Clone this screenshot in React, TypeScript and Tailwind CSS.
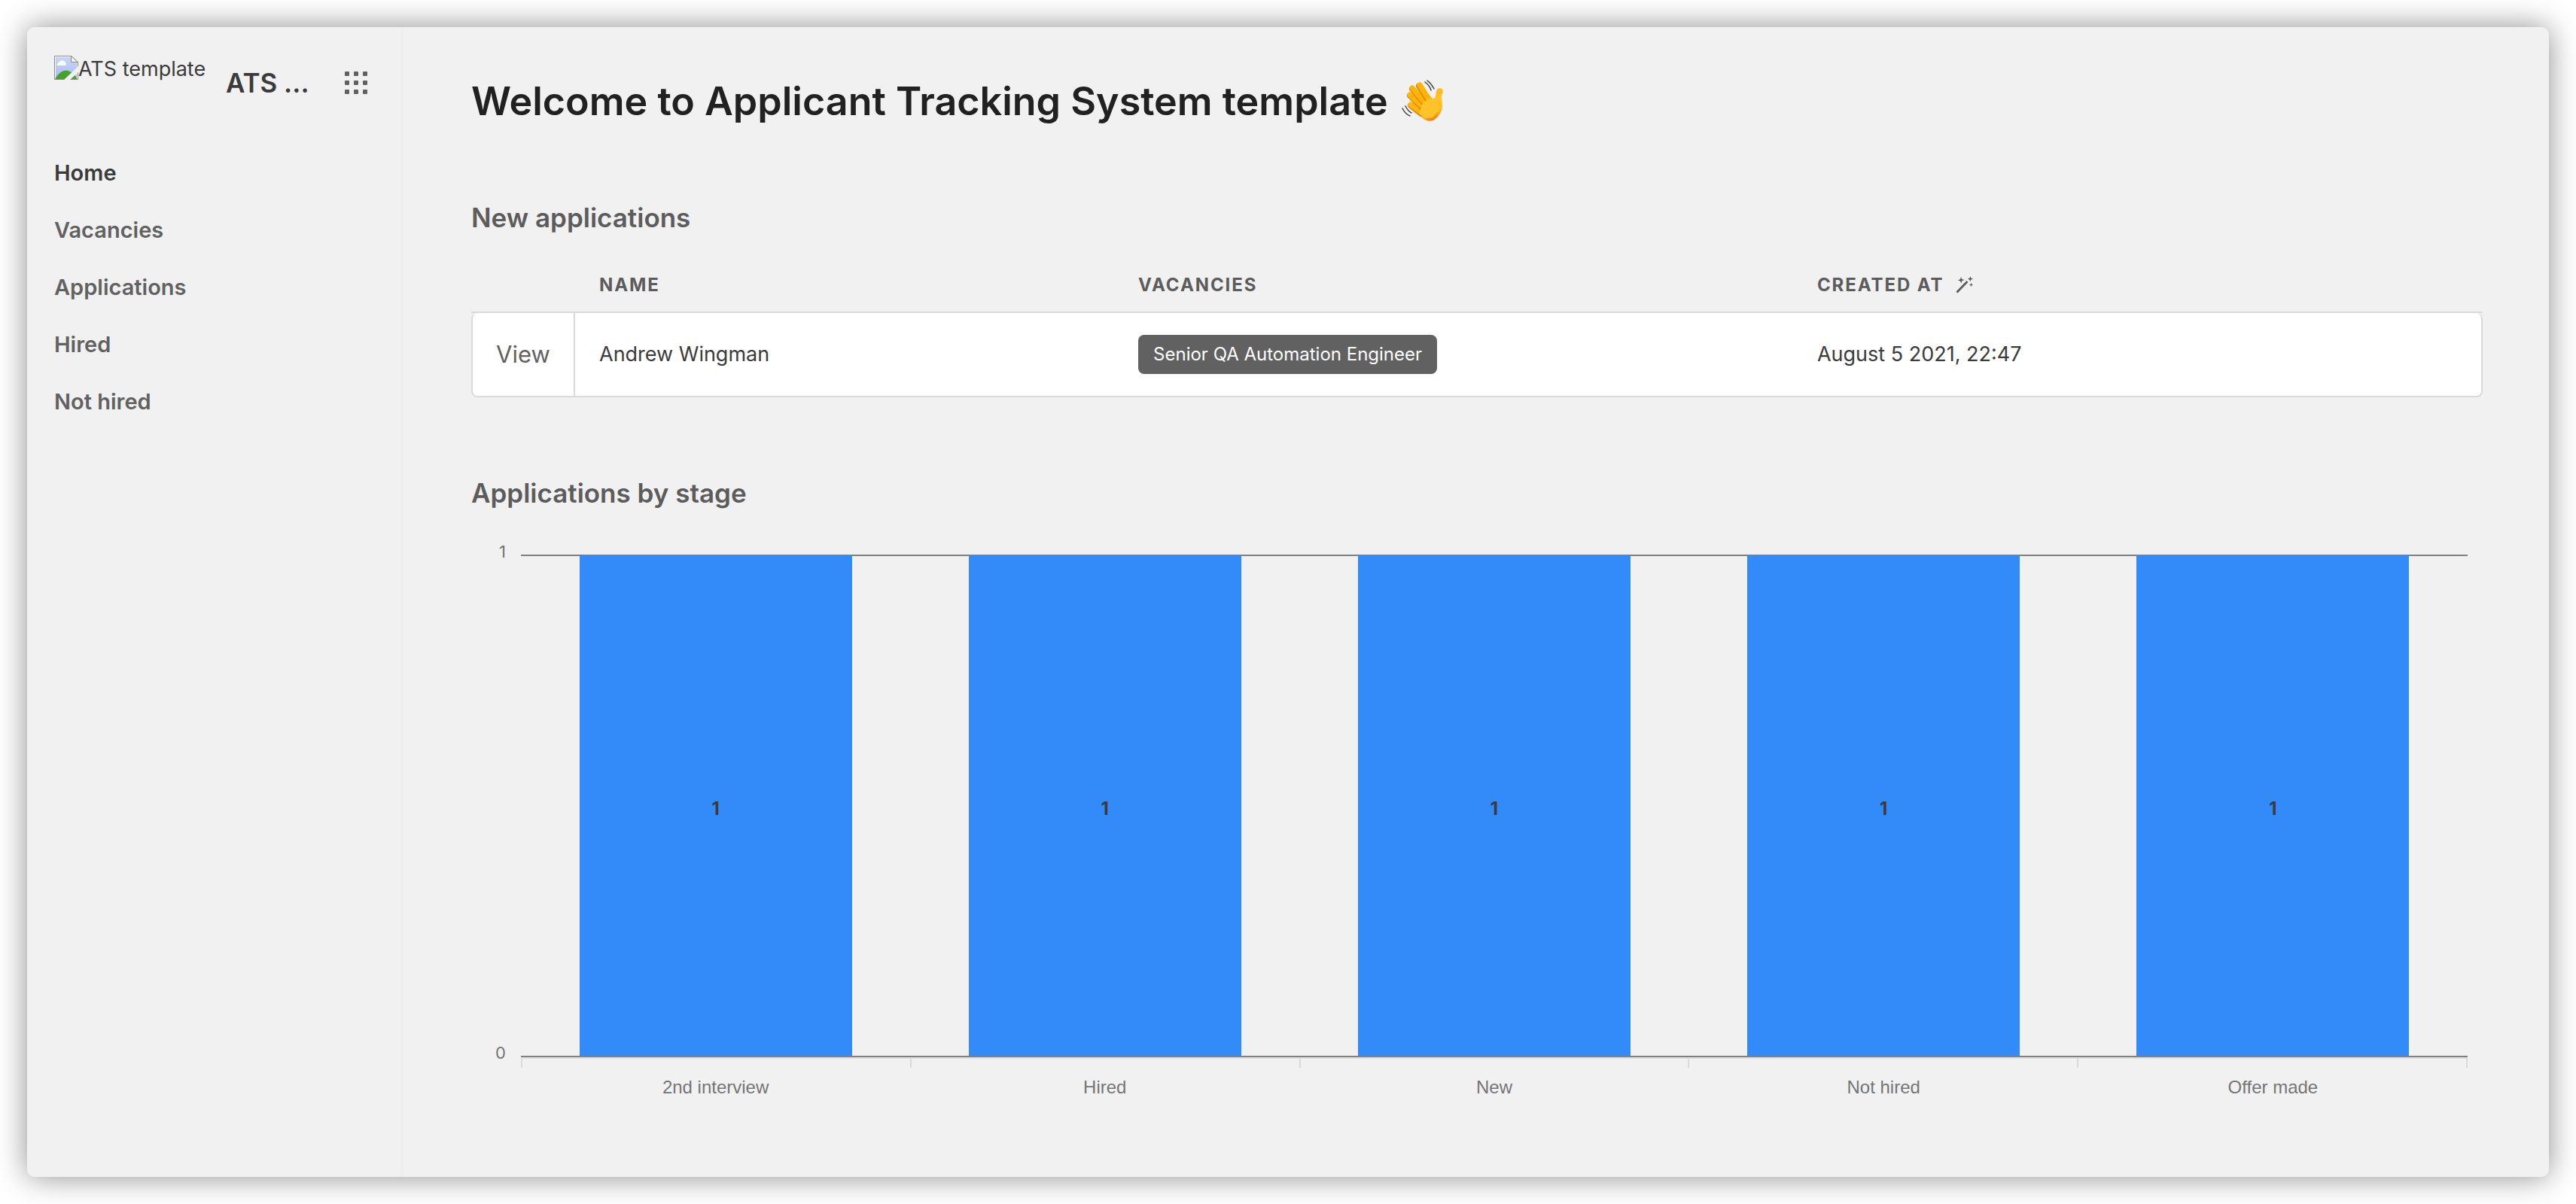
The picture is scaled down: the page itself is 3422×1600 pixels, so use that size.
import React from "react";

const navItems = ["Home", "Vacancies", "Applications", "Hired", "Not hired"];

const stages = [
  { label: "2nd interview", count: 1 },
  { label: "Hired", count: 1 },
  { label: "New", count: 1 },
  { label: "Not hired", count: 1 },
  { label: "Offer made", count: 1 },
];

function MissingImageIcon() {
  return (
    <svg viewBox="0 0 32 32" className="size-8 shrink-0" aria-hidden="true">
      <defs>
        <linearGradient id="sky" x1="0" y1="0" x2="0" y2="1">
          <stop offset="0" stopColor="#c6d6f8" />
          <stop offset="1" stopColor="#a9bdec" />
        </linearGradient>
      </defs>
      <path d="M0.5 0.5H22.5L31.5 8.5V31.5H0.5Z" fill="#fff" stroke="#8a8a8a" />
      <path d="M2 2H22V9H30V31H2Z" fill="url(#sky)" />
      <path d="M4 13a3 3 0 0 1 2-4a5 5 0 0 1 9 0a3 3 0 0 1 0 4Z" fill="#fff" />
      <path d="M1 31C6 23 11 19.500 16 19.500C22 20 27 25 30.500 31Z" fill="#4aa02c" />
      <path d="M22.500 0.500V8.500H31.500Z" fill="#f4f4f4" stroke="#8a8a8a" />
      <path d="M13 32L32 14V22L21 32Z" fill="#f1f1f1" />
    </svg>
  );
}

function GridIcon() {
  return (
    <svg viewBox="0 0 30 30" className="size-[30px]" fill="#616161" aria-hidden="true">
      {[0, 12, 24].map((y) =>
        [0, 12, 24].map((x) => <rect key={`${x}-${y}`} x={x} y={y} width="6" height="6" rx="1" />)
      )}
    </svg>
  );
}

function WandIcon() {
  return (
    <svg viewBox="0 0 24 24" className="size-6" fill="#5c5c5c" aria-hidden="true">
      <path d="M0.500 20.500L14.500 6L16.500 8L2.500 22.500Z" />
      <path d="M7 1L8.300 4L11.500 5L8.300 6.200L7.500 9.500L6 6.500L3 5.500L6 4Z" />
      <path d="M19.500 0L20.300 2.500L23 3.500L20.500 4.500L19.500 7L18 4.500L16 3.500L18.500 2.500Z" />
      <path d="M20.500 9L21.300 10.800L23 11.500L21.300 12.300L20.500 14L19.700 12.300L18 11.500L19.700 10.800Z" />
    </svg>
  );
}

function WavingHand() {
  return (
    <svg viewBox="0 0 56 58" className="h-[58px] w-14" role="img" aria-label="Waving hand">
      <defs>
        <linearGradient id="skin" gradientUnits="userSpaceOnUse" x1="16" y1="2" x2="38" y2="56">
          <stop offset="0" stopColor="#ffab00" />
          <stop offset="0.600" stopColor="#ffc42a" />
          <stop offset="0.850" stopColor="#ffb412" />
          <stop offset="1" stopColor="#e77a08" />
        </linearGradient>
      </defs>
      <path
        d="M20 42L30 24L37 20C40 25 42 26 44 24C46 21 45 16 47 13C49 10 55 11 55 15C55 18 52 20 53 25C54 32 55 40 50 46C45 54 38 57 31 53C27 51 24 47 20 42Z"
        fill="url(#skin)"
      />
      <g fill="none" strokeLinecap="round">
        <path d="M12 34L26 45" stroke="#e58a00" strokeWidth="8" />
        <path d="M12 33L27 44" stroke="#ffb50f" strokeWidth="7" />
        <path d="M11 21L28 38" stroke="#e58a00" strokeWidth="8" />
        <path d="M11 20L29 37" stroke="#ffb50f" strokeWidth="7" />
        <path d="M14 12L32 34" stroke="#e58a00" strokeWidth="8" />
        <path d="M14 11L33 33" stroke="#ffb20a" strokeWidth="7" />
        <path d="M23 8L37 30" stroke="#e58a00" strokeWidth="8" />
        <path d="M24 7L38 29" stroke="#ffb20a" strokeWidth="7" />
      </g>
      <path d="M26 45L28 35L36 27L44 29L48 38L40 48L32 49Z" fill="#ffc42a" stroke="#ffc42a" strokeWidth="4" strokeLinejoin="round" />
      <path
        d="M34 1C38 4 41 8 43 12M31 3C35 6 38 10 39 14M1 38C3 42 6 46 11 48M5 35C7 39 9 42 13 44"
        fill="none"
        stroke="#454545"
        strokeWidth="1.500"
        strokeLinecap="round"
      />
    </svg>
  );
}

function Sidebar() {
  return (
    <aside className="w-[500px] shrink-0 border-r-4 border-[#eeeeee] px-9 pt-9">
      <div className="flex h-[76px] items-center">
        <div className="flex w-[228px] items-start self-stretch pt-0.5 text-[27px] leading-9 text-[#3b3b3b]">
          <MissingImageIcon />
          <span className="whitespace-nowrap">ATS template</span>
        </div>
        <span className="text-[35px] font-semibold whitespace-nowrap text-[#3b3b3b]">ATS ...</span>
        <button type="button" aria-label="Apps" className="mr-2 ml-auto">
          <GridIcon />
        </button>
      </div>
      <nav className="mt-11 flex flex-col">
        {navItems.map((item, i) => (
          <a
            key={item}
            href="#"
            className={`flex h-[76px] items-center text-[29px] font-semibold ${i === 0 ? "text-[#3b3b3b]" : "text-[#616161]"}`}
          >
            {item}
          </a>
        ))}
      </nav>
    </aside>
  );
}

function ApplicationsTable() {
  return (
    <table className="w-full table-fixed border-separate border-spacing-0 text-left">
      <colgroup>
        <col className="w-[138px]" />
        <col className="w-[26.800%]" />
        <col className="w-[33.750%]" />
        <col />
      </colgroup>
      <thead>
        <tr className="h-[72px] text-2xl font-bold tracking-[0.080em] text-[#5c5c5c] uppercase">
          <td className="border-b-2 border-[#dadada]" />
          <th scope="col" className="border-b-2 border-[#dadada] pl-8">Name</th>
          <th scope="col" className="border-b-2 border-[#dadada] pl-8">Vacancies</th>
          <th scope="col" className="border-b-2 border-[#dadada] pl-8">
            <span className="flex items-center gap-4">
              Created at
              <WandIcon />
            </span>
          </th>
        </tr>
      </thead>
      <tbody>
        <tr className="h-28 text-[27px] text-[#3b3b3b]">
          <td className="rounded-l-lg border-x-2 border-b-2 border-[#dadada] bg-white text-center">
            <a href="#" className="text-[31px] text-[#616161]">View</a>
          </td>
          <td className="border-b-2 border-[#dadada] bg-white pl-8">Andrew Wingman</td>
          <td className="border-b-2 border-[#dadada] bg-white pl-8">
            <span className="inline-flex h-[52px] items-center rounded-lg bg-[#616161] px-5 align-middle text-2xl text-white">
              Senior QA Automation Engineer
            </span>
          </td>
          <td className="rounded-r-lg border-r-2 border-b-2 border-[#dadada] bg-white pl-8">August 5 2021, 22:47</td>
        </tr>
      </tbody>
    </table>
  );
}

function StageChart() {
  return (
    <div className="flex pr-5 pl-8 text-2xl leading-8 text-[#757575]">
      <div className="flex h-[666px] w-[34px] flex-col justify-between pr-5 text-right text-[22px]">
        <span className="-mt-5">1</span>
        <span className="-mb-3">0</span>
      </div>
      <div className="min-w-0 flex-1">
        <div className="grid h-[668px] grid-cols-5 border-y-2 border-[#808080]">
          {stages.map((s) => (
            <div key={s.label} className="flex justify-center">
              <div className="-mt-px flex w-[70%] items-center justify-center bg-[#338af9] pt-2 font-bold text-[#3b3b3b]">
                {s.count}
              </div>
            </div>
          ))}
        </div>
        <div className="grid h-3.5 grid-cols-5 border-t-2 border-r-2 border-t-[#e0e0e0] border-r-[#dadada]">
          {stages.map((s) => (
            <div key={s.label} className="border-l-2 border-[#dadada]" />
          ))}
        </div>
        <div className="mt-2.5 grid grid-cols-5 text-center">
          {stages.map((s) => (
            <span key={s.label} className="font-['Liberation_Sans',sans-serif]">{s.label}</span>
          ))}
        </div>
      </div>
    </div>
  );
}

export default function App() {
  return (
    <div className="flex min-h-screen bg-white p-9 font-[Inter,sans-serif]">
      <div className="flex flex-1 overflow-hidden rounded-[10px] bg-[#f1f1f1] shadow-[0_0_40px_rgba(0,0,0,0.45)]">
        <Sidebar />
        <main className="min-w-0 flex-1 pt-16 pr-22 pl-[90px]">
          <h1 className="flex h-[70px] items-center gap-[18px] text-[52px] font-semibold text-[#212121]">
            Welcome to Applicant Tracking System template
            <WavingHand />
          </h1>
          <section className="mt-[92px]">
            <h2 className="mb-7 text-[35px] leading-[54px] font-semibold text-[#5c5c5c]">New applications</h2>
            <ApplicationsTable />
          </section>
          <section className="mt-[100px]">
            <h2 className="mb-[55px] text-[35px] leading-[54px] font-semibold text-[#5c5c5c]">Applications by stage</h2>
            <StageChart />
          </section>
        </main>
      </div>
    </div>
  );
}
